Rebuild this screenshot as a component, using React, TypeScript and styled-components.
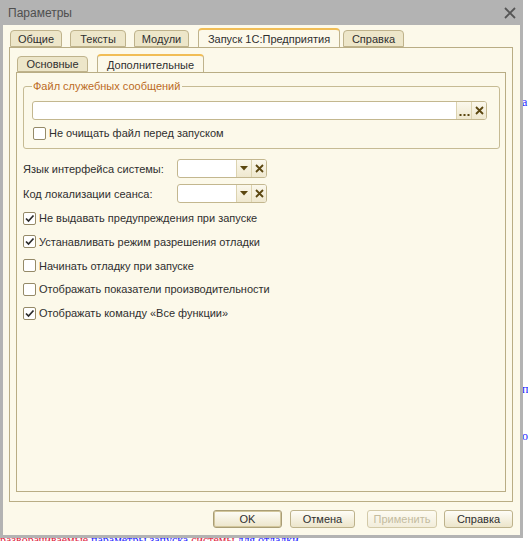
import React, { FC, useState } from "react";
import styled, { createGlobalStyle } from "styled-components";

const GlobalStyle = createGlobalStyle`
  html, body {
    margin: 0;
    padding: 0;
    background: #ffffff;
  }
  body {
    font-family: "Liberation Sans", Arial, sans-serif;
    font-size: 11px;
    color: #333333;
  }
  * {
    box-sizing: border-box;
  }
`;

const Page = styled.div`
  position: relative;
  width: 528px;
  height: 541px;
  overflow: hidden;
  background: #ffffff;
`;

const Backdrop = styled.div`
  display: flex;
  flex-direction: column;
  font-family: "Liberation Serif", "Times New Roman", serif;
  font-size: 12px;
  line-height: 12px;
  color: #1a1aff;
`;

const Peek = styled.div<{ $top: number; $left: number }>`
  margin-top: ${(p) => p.$top}px;
  padding-left: ${(p) => p.$left}px;
  white-space: nowrap;
`;

const Red = styled.span`
  color: #e0203a;
`;

const Window = styled.div`
  position: absolute;
  top: 0;
  left: 0;
  width: 523px;
  height: 538px;
  display: flex;
  flex-direction: column;
  background: #b3b3b3;
  padding: 0 3px 3px 3px;
`;

const TitleBar = styled.div`
  height: 25px;
  display: flex;
  align-items: center;
  justify-content: space-between;
  padding: 0 4px 0 5px;
`;

const Title = styled.div`
  font-size: 12px;
  color: #4f4f4f;
`;

const Body = styled.div`
  flex: 1;
  display: flex;
  flex-direction: column;
  background: #fcf9ea;
  padding: 3px 7px 0 6px;
`;

const TabStrip = styled.div<{ $height: number }>`
  display: flex;
  align-items: flex-end;
  height: ${(p) => p.$height}px;
  margin-bottom: -1px;
  padding-left: 1px;
`;

const Tab = styled.div<{ $active?: boolean; $height: number; $width: number }>`
  width: ${(p) => p.$width}px;
  height: ${(p) => (p.$active ? p.$height : p.$height - 3)}px;
  margin-bottom: ${(p) => (p.$active ? 0 : 1)}px;
  margin-left: ${(p) => (p.$active ? 1 : 0)}px;
  margin-right: ${(p) => (p.$active ? 3 : 8)}px;
  display: flex;
  align-items: center;
  justify-content: center;
  border: 1px solid #bfb38c;
  border-top: ${(p) => (p.$active ? "2px solid #f1bd55" : "1px solid #bfb38c")};
  border-bottom: ${(p) => (p.$active ? "none" : "1px solid #bfb38c")};
  border-radius: 4px 4px 0 0;
  background: ${(p) => (p.$active ? "#fcf9ea" : "#ede6c9")};
  font-size: 11px;
  color: #2f2f2f;
  white-space: nowrap;
  cursor: default;
`;

const Panel = styled.div`
  height: 455px;
  display: flex;
  flex-direction: column;
  border: 1px solid #b9ad85;
  padding: 6px 6px 9px 6px;
`;

const SubPanel = styled.div`
  flex: 1;
  display: flex;
  flex-direction: column;
  border: 1px solid #b9ad85;
  padding: 6px 5px 0 6px;
`;

const Group = styled.fieldset`
  margin: 0;
  min-width: 0;
  border: 1px solid #c6bb94;
  border-radius: 3px;
  padding: 8px 12px 8px 8px;
`;

const Legend = styled.legend`
  padding: 0 2px 0 1px;
  font-size: 11px;
  line-height: 14px;
  color: #bb6b1f;
`;

const Field = styled.div<{ $width?: number }>`
  display: flex;
  height: 19px;
  width: ${(p) => (p.$width ? `${p.$width}px` : "auto")};
  border: 1px solid #c3b78f;
  border-radius: 3px;
  background: #ffffff;
  overflow: hidden;
`;

const FieldInput = styled.div`
  flex: 1;
`;

const FieldButton = styled.div`
  width: 15px;
  display: flex;
  align-items: center;
  justify-content: center;
  border-left: 1px solid #dcd3b0;
  background: linear-gradient(#fbf8ec, #efe8cf);
`;

const CheckRow = styled.label<{ $top?: number }>`
  display: flex;
  align-items: center;
  gap: 3px;
  height: 14px;
  margin-top: ${(p) => p.$top ?? 0}px;
  margin-left: ${(p) => (p.$top !== undefined ? 1 : 0)}px;
  font-size: 11px;
  color: #2f2f2f;
  cursor: default;
`;

const Box = styled.span`
  width: 13px;
  height: 13px;
  display: flex;
  align-items: center;
  justify-content: center;
  border: 1px solid #958a68;
  border-radius: 2px;
  background: #ffffff;
`;

const Fields = styled.div`
  display: grid;
  grid-template-columns: 154px 90px;
  row-gap: 6px;
  align-items: center;
  margin-top: 10px;
`;

const FieldLabel = styled.div`
  font-size: 11px;
  color: #2f2f2f;
`;

const Options = styled.div`
  display: flex;
  flex-direction: column;
  gap: 9.75px;
  margin-top: 8px;
`;

const Footer = styled.div`
  display: flex;
  justify-content: flex-end;
  margin-top: 8px;
`;

const Button = styled.button<{ $width: number; $gap: number; $default?: boolean }>`
  width: ${(p) => p.$width}px;
  height: 18px;
  margin-left: ${(p) => p.$gap}px;
  padding: 0;
  border: 1px solid ${(p) => (p.$default ? "#a99d75" : "#bdb28b")};
  border-radius: 3px;
  box-shadow: ${(p) => (p.$default ? "inset 0 0 0 1px #d2c69c" : "none")};
  background: linear-gradient(#fefdf7, #ece5ca);
  font-family: "Liberation Sans", Arial, sans-serif;
  font-size: 11px;
  color: #2f2f2f;
  &:disabled {
    color: #c4bc9f;
    border-color: #d3caa8;
    background: linear-gradient(#fdfbf2, #f2eddb);
  }
`;

const CloseIcon = () => (
  <svg width="12" height="12" viewBox="0 0 12 12">
    <path d="M1 1 L11 11 M11 1 L1 11" stroke="#555" strokeWidth="1.8" />
  </svg>
);

const ClearIcon = () => (
  <svg width="9" height="9" viewBox="0 0 9 9">
    <path d="M1 1 L8 8 M8 1 L1 8" stroke="#5b4710" strokeWidth="1.8" />
  </svg>
);

const DotsIcon = () => (
  <svg width="11" height="12" viewBox="0 0 11 12">
    <rect x="0.5" y="9" width="2" height="2" fill="#5b4710" />
    <rect x="4.5" y="9" width="2" height="2" fill="#5b4710" />
    <rect x="8.5" y="9" width="2" height="2" fill="#5b4710" />
  </svg>
);

const ArrowIcon = () => (
  <svg width="8" height="5" viewBox="0 0 8 5">
    <path d="M0 0 H8 L4 4.5 Z" fill="#5b4710" />
  </svg>
);

const CheckIcon = () => (
  <svg width="11" height="11" viewBox="0 0 11 11">
    <path d="M2 5.5 L4.5 8 L9.5 2.5" stroke="#2b2b2b" strokeWidth="1.7" fill="none" />
  </svg>
);

const Check: FC<{ label: string; checked: boolean; top?: number; onToggle: () => void }> = ({
  label,
  checked,
  top,
  onToggle,
}) => (
  <CheckRow $top={top} onClick={onToggle}>
    <Box>{checked && <CheckIcon />}</Box>
    {label}
  </CheckRow>
);

const Combo: FC = () => (
  <Field $width={90}>
    <FieldInput />
    <FieldButton>
      <ArrowIcon />
    </FieldButton>
    <FieldButton>
      <ClearIcon />
    </FieldButton>
  </Field>
);

const mainTabs = [
  { name: "Общие", width: 52 },
  { name: "Тексты", width: 56 },
  { name: "Модули", width: 55 },
  { name: "Запуск 1С:Предприятия", width: 142 },
  { name: "Справка", width: 61 },
];
const subTabs = [
  { name: "Основные", width: 71 },
  { name: "Дополнительные", width: 107 },
];

const App: FC = () => {
  const [tab, setTab] = useState(3);
  const [subTab, setSubTab] = useState(1);
  const [keepFile, setKeepFile] = useState(false);
  const [options, setOptions] = useState([
    { label: "Не выдавать предупреждения при запуске", checked: true },
    { label: "Устанавливать режим разрешения отладки", checked: true },
    { label: "Начинать отладку при запуске", checked: false },
    { label: "Отображать показатели производительности", checked: false },
    { label: "Отображать команду «Все функции»", checked: true },
  ]);

  const toggle = (index: number) => {
    setOptions((old) =>
      old.map((o, i) => (i === index ? { ...o, checked: !o.checked } : o))
    );
  };

  return (
    <Page>
      <GlobalStyle />
      <Backdrop>
        <Peek $top={96} $left={522}>а</Peek>
        <Peek $top={275} $left={522}>п</Peek>
        <Peek $top={35} $left={522}>о</Peek>
        <Peek $top={92} $left={0}>
          <Red>разворачиваемые</Red> параметры запуска <Red>системы</Red> для отладки
        </Peek>
      </Backdrop>
      <Window>
        <TitleBar>
          <Title>Параметры</Title>
          <CloseIcon />
        </TitleBar>
        <Body>
          <TabStrip $height={20}>
            {mainTabs.map((t, index) => (
              <Tab
                key={t.name}
                $height={20}
                $width={t.width}
                $active={index === tab}
                onClick={() => setTab(index)}
              >
                {t.name}
              </Tab>
            ))}
          </TabStrip>
          <Panel>
            <TabStrip $height={19}>
              {subTabs.map((t, index) => (
                <Tab
                  key={t.name}
                  $height={19}
                  $width={t.width}
                  $active={index === subTab}
                  onClick={() => setSubTab(index)}
                >
                  {t.name}
                </Tab>
              ))}
            </TabStrip>
            <SubPanel>
              <Group>
                <Legend>Файл служебных сообщений</Legend>
                <Field>
                  <FieldInput />
                  <FieldButton>
                    <DotsIcon />
                  </FieldButton>
                  <FieldButton>
                    <ClearIcon />
                  </FieldButton>
                </Field>
                <Check
                  label="Не очищать файл перед запуском"
                  checked={keepFile}
                  top={6}
                  onToggle={() => setKeepFile(!keepFile)}
                />
              </Group>
              <Fields>
                <FieldLabel>Язык интерфейса системы:</FieldLabel>
                <Combo />
                <FieldLabel>Код локализации сеанса:</FieldLabel>
                <Combo />
              </Fields>
              <Options>
                {options.map((o, index) => (
                  <Check
                    key={o.label}
                    label={o.label}
                    checked={o.checked}
                    onToggle={() => toggle(index)}
                  />
                ))}
              </Options>
            </SubPanel>
          </Panel>
          <Footer>
            <Button $width={69} $gap={0} $default>
              OK
            </Button>
            <Button $width={65} $gap={8}>
              Отмена
            </Button>
            <Button $width={70} $gap={12} disabled>
              Применить
            </Button>
            <Button $width={69} $gap={7}>
              Справка
            </Button>
          </Footer>
        </Body>
      </Window>
    </Page>
  );
};

export default App;
